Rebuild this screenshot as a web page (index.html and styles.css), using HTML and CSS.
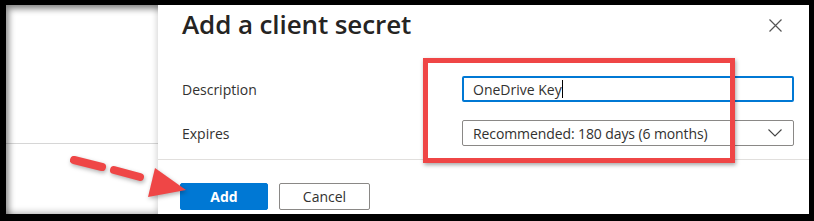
FILE: index.html
```html
<!DOCTYPE html>
<html lang="en">
<head>
  <meta charset="UTF-8">
  <title>Add a client secret</title>
  <link rel="stylesheet" href="styles.css">
</head>
<body>
  <div class="frame">
    <div class="screen">
      <div class="side">
        <div class="side-top"></div>
      </div>

      <div class="panel">
        <div class="panel-head">
          <h1>Add a client secret</h1>
          <button class="close" aria-label="Close">
            <svg width="13" height="13" viewBox="0 0 13 13"><path d="M0.5 0.5 L12.5 12.5 M12.5 0.5 L0.5 12.5" stroke="#555" stroke-width="1.2" fill="none"/></svg>
          </button>
        </div>

        <div class="form">
          <div class="row">
            <label for="desc">Description</label>
            <div class="field focused">
              <span>OneDrive Key</span><span class="caret"></span>
            </div>
          </div>
          <div class="row">
            <label>Expires</label>
            <div class="field select">
              <span>Recommended: 180 days (6 months)</span>
              <svg width="14" height="8" viewBox="0 0 14 8"><path d="M0.5 0.5 L7 7 L13.5 0.5" stroke="#444" stroke-width="1.1" fill="none"/></svg>
            </div>
          </div>
        </div>

        <div class="actions">
          <button class="btn primary">Add</button>
          <button class="btn">Cancel</button>
        </div>
      </div>

      <div class="highlight"></div>
      <svg class="arrow" width="136" height="54" viewBox="0 0 136 54">
        <g stroke="#ef4646" stroke-width="8" stroke-linecap="round">
          <line x1="22" y1="13" x2="50" y2="20"/>
          <line x1="62" y1="23" x2="88" y2="30"/>
        </g>
        <polygon points="103,21 134,43 96,50" fill="#ef4646"/>
      </svg>
    </div>
  </div>
</body>
</html>
```

FILE: styles.css
```css
* {
  box-sizing: border-box;
}
body {
  margin: 0;
  background: #000;
  font-family: "Open Sans", "Noto Sans", sans-serif;
  color: #323130;
}
.frame {
  width: 814px;
  height: 221px;
  background: #000;
  padding: 5px 5px 7px 6px;
}
.screen {
  position: relative;
  display: flex;
  height: 100%;
  background: #fff;
  overflow: hidden;
}
.screen::after {
  content: "";
  position: absolute;
  inset: 0;
  box-shadow: inset 3px 4px 6px rgba(0,0,0,0.45), inset -4px -2px 6px rgba(0,0,0,0.25);
  pointer-events: none;
}
.side {
  width: 152px;
  flex: none;
}
.side-top {
  height: 139px;
  border-bottom: 1px solid #d6d6d6;
}
.panel {
  flex: 1;
  padding: 0 15px 0 24px;
  box-shadow: -2px 0 5px rgba(0,0,0,0.14);
  z-index: 1;
  background: #fff;
}
.panel-head {
  display: flex;
  justify-content: space-between;
  align-items: flex-start;
  padding-top: 3px;
}
h1 {
  margin: 0;
  font-size: 26px;
  font-weight: 600;
  line-height: 32px;
  color: #252423;
  letter-spacing: -0.1px;
}
.close {
  border: none;
  background: none;
  padding: 0;
  margin: 11px 12px 0 0;
  width: 13px;
  height: 13px;
  display: flex;
}
.form {
  margin-top: 36px;
  display: flex;
  flex-direction: column;
  gap: 18px;
  padding-bottom: 13px;
  margin-right: -15px;
  padding-right: 15px;
  border-bottom: 1px solid #e1dfdd;
  margin-left: -24px;
  padding-left: 24px;
}
.row {
  display: flex;
  align-items: center;
}
.row label {
  width: 280px;
  flex: none;
  font-size: 14px;
}
.field {
  flex: 1;
  height: 26px;
  border: 1px solid #8a8886;
  border-radius: 2px;
  display: flex;
  align-items: center;
  padding: 0 10px;
  font-size: 14px;
  color: #323130;
}
.field.focused {
  border: 2px solid #0078d4;
  padding-left: 9px;
}
.caret {
  display: inline-block;
  width: 1px;
  height: 18px;
  background: #000;
}
.select {
  justify-content: space-between;
  padding-right: 11px;
  letter-spacing: -0.1px;
}
.actions {
  display: flex;
  gap: 11px;
  padding-top: 23px;
  margin-left: -2px;
}
.btn {
  height: 27px;
  width: 91px;
  border: 1px solid #8a8886;
  border-radius: 2px;
  background: #fff;
  font-family: inherit;
  font-size: 14px;
  color: #323130;
  padding: 0;
}
.btn.primary {
  width: 88px;
  background: #0078d4;
  border-color: #0078d4;
  color: #fff;
  font-weight: 700;
}
.highlight {
  position: absolute;
  left: 417px;
  top: 53px;
  width: 312px;
  height: 105px;
  border: 5px solid #ef4646;
  box-shadow: 1px 2px 4px rgba(0,0,0,0.35);
  z-index: 2;
}
.arrow {
  position: absolute;
  left: 46px;
  top: 142px;
  z-index: 2;
  filter: drop-shadow(1px 2px 2px rgba(0,0,0,0.3));
}
```
